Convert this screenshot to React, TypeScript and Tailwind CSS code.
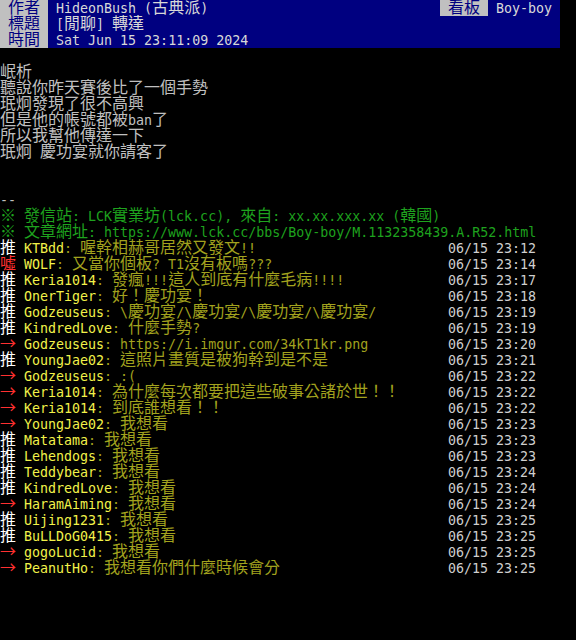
import React from "react";

// Terminal-ish rendering: latin cells are 8px wide, CJK cells are 16px wide, rows are 16px tall.
// Leading values are tuned so both fonts land on the same baseline (~13px from the row top).
const MONO = "font-['DejaVu_Sans_Mono','Liberation_Mono',monospace] text-[13.3px] leading-[17px]";
const CJK = "font-['Noto_Sans_CJK_TC','Noto_Sans_CJK_SC',sans-serif] text-[16px] leading-[12px]";

function T({ s, className = "" }: { s: string; className?: string }) {
  const runs = s.match(/[\x00-\x7f]+|[^\x00-\x7f]+/g) || [];
  return (
    <span className={`h-4 ${className}`}>
      {runs.map((r, i) => (
        <span
          key={i}
          className={`inline-block h-4 align-top whitespace-pre ${r.charCodeAt(0) < 128 ? MONO : CJK}`}
        >
          {r}
        </span>
      ))}
    </span>
  );
}

function Line({ children }: { children?: React.ReactNode }) {
  return <div className="h-4 leading-4 whitespace-pre flex">{children}</div>;
}

const pushes: [string, string, string, string][] = [
  ["推", "KTBdd", "喔幹相赫哥居然又發文!!", "06/15 23:12"],
  ["噓", "WOLF", "又當你個板? T1沒有板嗎???", "06/15 23:14"],
  ["推", "Keria1014", "發瘋!!!這人到底有什麼毛病!!!!", "06/15 23:17"],
  ["推", "OnerTiger", "好！慶功宴！", "06/15 23:18"],
  ["推", "Godzeuseus", "\\慶功宴/\\慶功宴/\\慶功宴/\\慶功宴/", "06/15 23:19"],
  ["推", "KindredLove", "什麼手勢?", "06/15 23:19"],
  ["→", "Godzeuseus", "https://i.imgur.com/34kT1kr.png", "06/15 23:20"],
  ["推", "YoungJae02", "這照片畫質是被狗幹到是不是", "06/15 23:21"],
  ["→", "Godzeuseus", ":(", "06/15 23:22"],
  ["→", "Keria1014", "為什麼每次都要把這些破事公諸於世！！", "06/15 23:22"],
  ["→", "Keria1014", "到底誰想看！！", "06/15 23:22"],
  ["→", "YoungJae02", "我想看", "06/15 23:23"],
  ["推", "Matatama", "我想看", "06/15 23:23"],
  ["推", "Lehendogs", "我想看", "06/15 23:23"],
  ["推", "Teddybear", "我想看", "06/15 23:24"],
  ["推", "KindredLove", "我想看", "06/15 23:24"],
  ["→", "HaramAiming", "我想看", "06/15 23:24"],
  ["推", "Uijing1231", "我想看", "06/15 23:25"],
  ["推", "BuLLDoG0415", "我想看", "06/15 23:25"],
  ["→", "gogoLucid", "我想看", "06/15 23:25"],
  ["→", "PeanutHo", "我想看你們什麼時候會分", "06/15 23:25"],
];

const body = [
  "岷析",
  "聽說你昨天賽後比了一個手勢",
  "珉炯發現了很不高興",
  "但是他的帳號都被ban了",
  "所以我幫他傳達一下",
  "珉炯 慶功宴就你請客了",
];

function HeaderLabel({ s }: { s: string }) {
  return <T s={` ${s} `} className="bg-[#c0c0c0] text-[#000080]" />;
}

export default function App() {
  return (
    <div className="w-[576px] h-[640px] bg-black text-[#c0c0c0] overflow-hidden">
      {/* header */}
      <div className="w-[560px] bg-[#000080] text-[#d8d8d8]">
        <Line>
          <HeaderLabel s="作者" />
          <T s=" HideonBush (古典派)" className="flex-1" />
          <HeaderLabel s="看板" />
          <T s=" Boy-boy " />
        </Line>
        <Line>
          <HeaderLabel s="標題" />
          <T s=" [閒聊] 轉達" />
        </Line>
        <Line>
          <HeaderLabel s="時間" />
          <T s=" Sat Jun 15 23:11:09 2024" />
        </Line>
      </div>

      <Line />
      {body.map((b, i) => (
        <Line key={i}>
          <T s={b} />
        </Line>
      ))}
      <Line />
      <Line />
      <Line>
        <T s="--" />
      </Line>
      <Line>
        <T s="※ 發信站: LCK實業坊(lck.cc), 來自: xx.xx.xxx.xx (韓國)" className="text-[#1ea21e]" />
      </Line>
      <Line>
        <T s="※ 文章網址: https://www.lck.cc/bbs/Boy-boy/M.1132358439.A.R52.html" className="text-[#1ea21e]" />
      </Line>

      {pushes.map(([tag, user, content, time], i) => (
        <Line key={i}>
          <div className="w-[448px] flex">
            <T s={tag} className={tag === "推" ? "text-white" : "text-[#ff3030]"} />
            <T s={" " + user} className="text-[#f2f24a]" />
            <T s={": " + content} className="text-[#a2a21e]" />
          </div>
          <T s={time} className="text-[#cfcfcf]" />
        </Line>
      ))}
    </div>
  );
}
